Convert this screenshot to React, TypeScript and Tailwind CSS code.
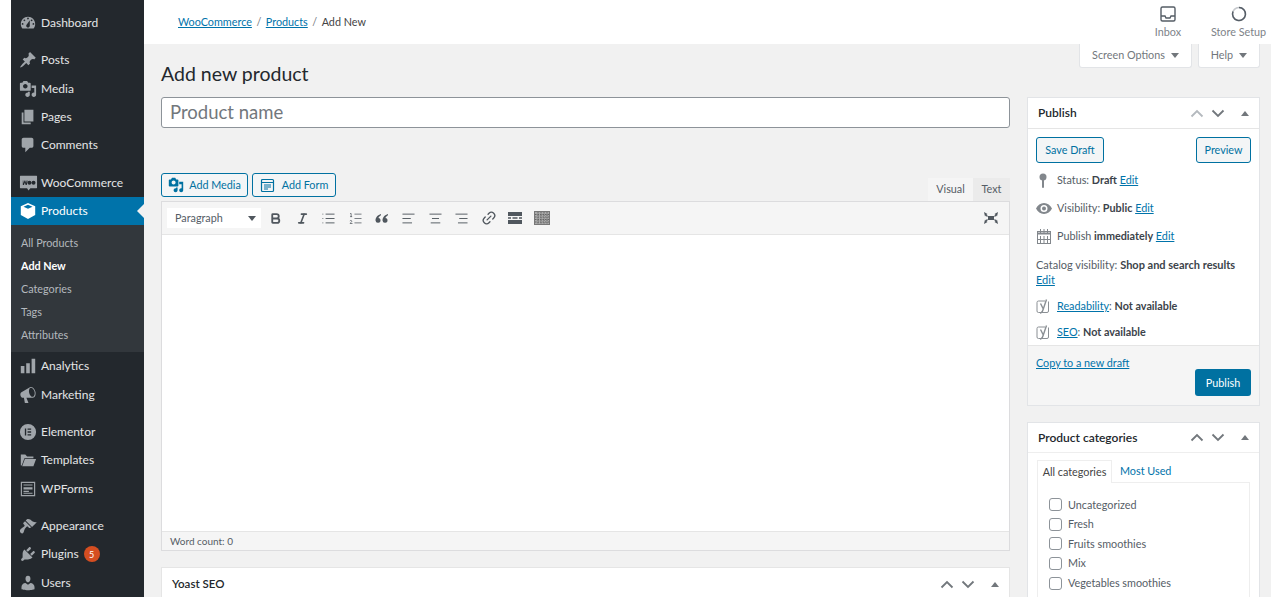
import { Bold, Italic, List, ListOrdered, AlignLeft, AlignCenter, AlignRight, Link2 } from "lucide-react";
import type { ReactNode } from "react";

const P: Record<string, string> = {
  dashboard: "M3.76 16h12.48c1.1-1.37 1.76-3.11 1.76-5 0-4.42-3.58-8-8-8s-8 3.58-8 8c0 1.89.66 3.63 1.76 5zM10 4c.55 0 1 .45 1 1s-.45 1-1 1-1-.45-1-1 .45-1 1-1zM6 6c.55 0 1 .45 1 1s-.45 1-1 1-1-.45-1-1 .45-1 1-1zm8 0c.55 0 1 .45 1 1s-.45 1-1 1-1-.45-1-1 .45-1 1-1zm-5.37 5.55L12 7v6c0 1.1-.9 2-2 2s-2-.9-2-2c0-.57.24-1.08.63-1.45zM4 10c.55 0 1 .45 1 1s-.45 1-1 1-1-.45-1-1 .45-1 1-1zm12 0c.55 0 1 .45 1 1s-.45 1-1 1-1-.45-1-1 .45-1 1-1z",
  pin: "M10.44 3.02l1.82-1.82 6.36 6.35-1.83 1.82c-1.05-.68-2.48-.57-3.41.36l-.75.75c-.92.93-1.04 2.35-.35 3.41l-1.83 1.82-2.41-2.41-2.8 2.79c-.42.42-3.38 2.71-3.8 2.29s1.86-3.39 2.28-3.81l2.79-2.79L4.1 9.36l1.83-1.82c1.05.69 2.48.57 3.4-.36l.75-.75c.93-.92 1.05-2.35.36-3.41z",
  media: "M13 11V4c0-.55-.45-1-1-1h-1.67L9 1H5L3.67 3H2c-.55 0-1 .45-1 1v7c0 .55.45 1 1 1h10c.55 0 1-.45 1-1zM7 4.5c1.38 0 2.5 1.12 2.5 2.5S8.38 9.5 7 9.5 4.5 8.38 4.5 7 5.62 4.5 7 4.5zM14 6h5v10.5c0 1.38-1.12 2.5-2.5 2.5S14 17.88 14 16.5s1.12-2.5 2.5-2.5c.17 0 .34.02.5.05V9h-3V6zm-4 8.05V13h2v3.5c0 1.38-1.12 2.5-2.5 2.5S7 17.88 7 16.5 8.12 14 9.5 14c.17 0 .34.02.5.05z",
  pages: "M6 15V2h10v13H6zm-1 1h8v2H3V5h2v11z",
  comment: "M5 2h9c1.1 0 2 .9 2 2v7c0 1.1-.9 2-2 2h-2l-5 5v-5H5c-1.1 0-2-.9-2-2V4c0-1.1.9-2 2-2z",
  woo: "M1.500 3h17c.3 0 .5.2.5.5v12c0 .3-.2.5-.5.500H12l-2 2.500L8.500 16h-7c-.3 0-.5-.2-.5-.5v-12c0-.3.2-.5.5-.5zM4 8v4.500h1.200L6.200 10l.8 2.500h1.200L9 8H8l-.5 2.800L6.600 8h-.8l-1 2.800L4.500 8H4zm7 .2a2.100 2.100 0 100 4.200 2.100 2.100 0 000-4.200zm4.300 0a2.100 2.100 0 100 4.200 2.100 2.100 0 000-4.200z",
  product: "M10 1l8 3.600v9.800L10 19l-8-4.600V4.600L10 1zm0 2L5 5.200l5 2.300 5-2.300L10 3z",
  chart: "M18 18V2h-4v16h4zm-6 0V7H8v11h4zm-6 0v-8H2v8h4z",
  mega: "M18.150 5.940c.46 1.620.38 3.220-.02 4.480-.42 1.280-1.260 2.180-2.300 2.480-.16.06-.26.06-.4.06l-.4.040h-6.800l2.220 5.500c.02.140-.06.260-.14.340-.08.100-.24.160-.34.160H6.950c-.1 0-.26-.06-.34-.16-.08-.08-.16-.2-.14-.34l-1-5.500H4.250c-.5.060-1.080-.18-1.540-.62s-.88-1.080-1.060-1.880c-.24-.8-.2-1.560-.02-2.200.18-.62.58-1.080 1.060-1.300l9-5.400.48-.28c.16-.08.28-.12.5-.18 1.040-.3 2.240.1 3.220.98s1.760 2.240 2.220 3.860zm-2.580 5.980c.4-.1.740-.34 1.040-.7.580-.7.860-1.760.860-3.040-.02-.64-.1-1.300-.28-1.980-.34-1.360-1.020-2.500-1.780-3.240s-1.680-1.100-2.460-.88c-.82.22-1.400.96-1.700 2-.32 1.040-.28 2.360.06 3.720.38 1.360 1 2.500 1.800 3.240.78.740 1.620 1.100 2.460.880z",
  elementor: "M10 1a9 9 0 110 18 9 9 0 010-18zM6.500 6v8H8V6H6.500zm3 0v1.600h4V6h-4zm0 3.200v1.600h4V9.200h-4zm0 3.200V14h4v-1.600h-4z",
  folder: "M2 4h5l2 2h7v2H6l-3 8H2V4zm4.500 5H19l-3 8H3.500l3-8z",
  forms: "M2 2h16v16H2V2zm1.300 1.300v13.400h13.400V3.300H3.300zM5 5h10v1.200H5V5zm0 3h10v2.500H5V8zm0 4h6v1.200H5V12zm0 2.200h10v1H5v-1z",
  brush: "M14.480 11.060L7.410 3.990l1.500-1.500c.5-.56 2.300-.47 3.510.32 1.210.8 1.430 1.280 2.910 2.100 1.180.64 2.450 1.260 4.450.85zm-.71.71L6.700 4.700 4.930 6.470c-.39.39-.39 1.020 0 1.410l1.060 1.060c.39.39.39 1.030 0 1.420-.6.6-1.430 1.110-2.210 1.690-.35.26-.7.53-1.010.84C1.430 13.710 1 14.650 1 15.540c0 .89.43 1.830 1.770 2.480 1.400.7 2.330-.45 2.650-1.800.42-1.810 1.620-4.280 3.070-5.290.53-.38 1.200-.34 1.530.02l.95.95c.39.38 1.030.38 1.420 0z",
  plug: "M13.110 4.360L9.870 7.600 8 5.730l3.240-3.240c.35-.34 1.050-.2 1.560.32.52.51.66 1.210.31 1.550zm-8 1.770l.91-1.120 9.010 9.010-1.190.84c-.71.71-2.630 1.160-3.820 1.160H6.140L4.900 17.260c-.59.59-1.540.59-2.120 0-.59-.58-.59-1.530 0-2.120l1.240-1.240v-3.880c0-1.130.4-3.190 1.090-3.890zm7.260 3.970l3.240-3.240c.34-.35 1.040-.21 1.550.31.52.51.66 1.210.31 1.550l-3.240 3.250z",
  users: "M10 9.250c-2.270 0-2.730-3.440-2.730-3.440C7 4.020 7.820 2 9.970 2c2.160 0 2.980 2.020 2.710 3.810 0 0-.41 3.440-2.680 3.440zm0 2.570L12.720 10c2.390 0 4.520 2.330 4.520 4.530v2.490s-3.650 1.130-7.240 1.130c-3.650 0-7.240-1.130-7.240-1.130v-2.490c0-2.250 1.940-4.480 4.470-4.480z",
};

function Dash({ d, size = 20, className = "" }: { d: string; size?: number; className?: string }) {
  return (
    <svg viewBox="0 0 20 20" width={size} height={size} fill="currentColor" fillRule="evenodd" className={className}>
      <path d={d} />
    </svg>
  );
}

function MenuItem({ icon, label, badge, active }: { icon: string; label: string; badge?: string; active?: boolean }) {
  return (
    <div className={`relative flex h-[28.33px] items-center ${active ? "bg-[#0073aa] text-white" : "text-[#e4e5e6]"}`}>
      <span className={`ml-[4px] flex w-[26px] justify-center ${active ? "text-white" : "text-[#a0a5aa]"}`}>
        <Dash d={P[icon]} size={icon === "woo" ? 19 : 18} />
      </span>
      <span className="text-[12px]">{label}</span>
      {badge && (
        <span className="ml-[5px] flex h-[16px] w-[16px] items-center justify-center rounded-full bg-[#d54e21] text-[9px] text-white">{badge}</span>
      )}
      {active && (
        <span className="absolute right-0 top-[7px] h-0 w-0 border-y-[7px] border-r-[7px] border-y-transparent border-r-[#f1f1f1]" />
      )}
    </div>
  );
}

function Sep() {
  return <div className="h-[9px]" />;
}

function Chevrons({ faded }: { faded?: boolean }) {
  return (
    <div className="flex items-center text-[#72777c]">
      <svg width="14" height="9" viewBox="0 0 14 9" fill="none" stroke="currentColor" strokeWidth="1.800" className={faded ? "text-[#b4b9be]" : ""}><path d="M1.500 7.500L7 2l5.500 5.500" /></svg>
      <svg width="14" height="9" viewBox="0 0 14 9" fill="none" stroke="currentColor" strokeWidth="1.800" className="ml-[7px]"><path d="M1.500 1.500L7 7l5.500-5.500" /></svg>
      <span className="ml-[16px] h-0 w-0 border-x-[4px] border-b-[5px] border-x-transparent border-b-[#72777c]" />
    </div>
  );
}

function EditLink({ children = "Edit" }: { children?: ReactNode }) {
  return <a className="text-[#0073aa] underline">{children}</a>;
}

function Row({ icon, children, h }: { icon: ReactNode; children: ReactNode; h: string }) {
  return (
    <div className={`flex items-center ${h}`}>
      <span className="flex w-[21px] shrink-0 justify-start text-[#82878c]">{icon}</span>
      <span className="text-[10.800px] text-[#555d66]">{children}</span>
    </div>
  );
}

function YoastIcon() {
  return (
    <svg width="15" height="17" viewBox="0 0 15 17" fill="none" className="text-[#8a8f94]" stroke="currentColor">
      <path d="M12.500 3.500V13a1.500 1.500 0 01-1.500 1.500H2.500A1.500 1.500 0 011 13V4.500A1.500 1.500 0 012.500 3H9" strokeWidth="1" />
      <path d="M4.500 5.500l2.800 5.500L10.500 1.500M7.300 11c-.4 2-1.200 3.500-3 4.500" strokeWidth="1.400" />
    </svg>
  );
}

function ToolIcon({ children }: { children: ReactNode }) {
  return <span className="flex w-[26.600px] justify-center text-[#50575e]">{children}</span>;
}

const cats = ["Uncategorized", "Fresh", "Fruits smoothies", "Mix", "Vegetables smoothies"];

export default function App() {
  return (
    <div className="relative flex h-[597px] w-[1271px] overflow-hidden bg-white font-['Lato','Open_Sans',sans-serif]">
      {/* Sidebar */}
      <aside className="ml-[11px] h-full w-[133px] shrink-0 bg-[#23282d] pt-[9px]">
        <MenuItem icon="dashboard" label="Dashboard" />
        <Sep />
        <MenuItem icon="pin" label="Posts" />
        <MenuItem icon="media" label="Media" />
        <MenuItem icon="pages" label="Pages" />
        <MenuItem icon="comment" label="Comments" />
        <Sep />
        <MenuItem icon="woo" label="WooCommerce" />
        <MenuItem icon="product" label="Products" active />
        <div className="h-[127px] bg-[#32373c] pt-[6px] text-[10.800px] text-[#b4b9be]">
          {["All Products", "Add New", "Categories", "Tags", "Attributes"].map((s) => (
            <div key={s} className={`flex h-[23px] items-center pl-[10px] ${s === "Add New" ? "font-bold text-white" : ""}`}>{s}</div>
          ))}
        </div>
        <MenuItem icon="chart" label="Analytics" />
        <MenuItem icon="mega" label="Marketing" />
        <Sep />
        <MenuItem icon="elementor" label="Elementor" />
        <MenuItem icon="folder" label="Templates" />
        <MenuItem icon="forms" label="WPForms" />
        <Sep />
        <MenuItem icon="brush" label="Appearance" />
        <MenuItem icon="plug" label="Plugins" badge="5" />
        <MenuItem icon="users" label="Users" />
      </aside>

      {/* Main */}
      <div className="relative min-w-0 flex-1 bg-[#f1f1f1]">
        <header className="flex h-[44px] items-center justify-between bg-white pl-[34px]">
          <div className="flex items-center text-[10.800px] text-[#444]">
            <a className="text-[#0073aa] underline">WooCommerce</a>
            <span className="mx-[4.500px] text-[#72777c]">/</span>
            <a className="text-[#0073aa] underline">Products</a>
            <span className="mx-[4.500px] text-[#72777c]">/</span>
            <span>Add New</span>
          </div>
          <div className="flex h-full text-[10.800px] text-[#7d8288]">
            <div className="flex w-[76px] flex-col items-center pt-[5px]">
              <svg width="18" height="18" viewBox="0 0 18 18" fill="none" stroke="#555d66" strokeWidth="1.400">
                <rect x="2" y="2" width="14" height="14" rx="1.500" />
                <path d="M2 11h4l1 2h4l1-2h4" />
              </svg>
              <span className="mt-[1px] leading-[16px]">Inbox</span>
            </div>
            <div className="flex w-[65px] flex-col items-center pt-[5px]">
              <svg width="18" height="18" viewBox="0 0 18 18" fill="none" strokeWidth="1.500">
                <circle cx="9" cy="9" r="6.500" stroke="#c5c8cc" />
                <path d="M9 2.500a6.500 6.500 0 11-6 4" stroke="#555d66" />
              </svg>
              <span className="mt-[1px] whitespace-nowrap leading-[16px]">Store Setup</span>
            </div>
          </div>
        </header>

        {/* Screen options tabs */}
        <div className="absolute right-[11px] top-[44px] flex gap-[6px] text-[10.800px] text-[#72777c]">
          <div className="flex h-[24px] w-[113px] items-center justify-center gap-[6px] rounded-b-[3px] border-x border-b border-[#e2e4e7] bg-white">
            Screen Options
            <span className="h-0 w-0 border-x-[4px] border-t-[5px] border-x-transparent border-t-[#72777c]" />
          </div>
          <div className="flex h-[24px] w-[62px] items-center justify-center gap-[6px] rounded-b-[3px] border-x border-b border-[#e2e4e7] bg-white">
            Help
            <span className="h-0 w-0 border-x-[4px] border-t-[5px] border-x-transparent border-t-[#72777c]" />
          </div>
        </div>

        <div className="flex pl-[17px]">
          {/* Left column */}
          <div className="w-[849px]">
            <h1 className="h-[53px] pt-[17px] text-[19.500px] leading-[26px] text-[#23282d]">Add new product</h1>
            <div className="flex h-[31px] items-center rounded-[3px] border border-[#8d9399] bg-white pl-[8px] pt-[1px] text-[18.500px] text-[#72777c]">Product name</div>

            <div className="mt-[45px] flex h-[28px] items-start justify-between">
              <div className="flex gap-[4px] text-[10.800px] text-[#0071a1]">
                <div className="flex h-[24px] w-[87px] items-center justify-center gap-[5px] rounded-[3px] border border-[#0071a1] bg-[#f3f5f6]">
                  <Dash d={P.media} size={16} />Add Media
                </div>
                <div className="flex h-[24px] w-[84px] items-center justify-center gap-[7px] rounded-[3px] border border-[#0071a1] bg-[#f3f5f6]">
                  <svg width="15" height="15" viewBox="0 0 15 15" fill="none" stroke="currentColor" strokeWidth="1.200">
                    <rect x="1.500" y="1.500" width="12" height="12" rx="1" />
                    <path d="M1.500 4.500h12M4 7h7M4 9h7M4 11h4" />
                  </svg>
                  Add Form
                </div>
              </div>
              <div className="mt-[5px] flex h-[23px] text-[10.800px] text-[#555d66]">
                <div className="flex w-[45px] items-center justify-center bg-[#f5f5f5]">Visual</div>
                <div className="flex w-[37px] items-center justify-center bg-[#ebebeb]">Text</div>
              </div>
            </div>

            <div className="border border-[#dcdcde]">
              <div className="flex h-[33px] items-center border-b border-[#e5e5e5] bg-[#f5f5f5] pl-[5px] pr-[10px]">
                <div className="flex h-[20px] w-[94px] items-center justify-between bg-white pl-[8px] pr-[5px] text-[10.800px] text-[#555d66]">
                  Paragraph
                  <span className="h-0 w-0 border-x-[4px] border-t-[5px] border-x-transparent border-t-[#50575e]" />
                </div>
                <div className="ml-[1.500px] flex items-center">
                  <ToolIcon><Bold size={13} strokeWidth={3.400} /></ToolIcon>
                  <ToolIcon><Italic size={13} strokeWidth={3} /></ToolIcon>
                  <ToolIcon><List size={15} strokeWidth={1.500} /></ToolIcon>
                  <ToolIcon><ListOrdered size={15} strokeWidth={1.200} /></ToolIcon>
                  <ToolIcon>
                    <svg width="14" height="11" viewBox="0 0 14 11" fill="currentColor">
                      <path d="M6 1C3 2 .500 4 .500 7.500a2.500 2.500 0 105-.5C5.500 5.800 4.500 5 3.400 5 3.800 3.800 4.800 2.800 6 2.200V1zM13 1c-3 1-5.500 3-5.500 6.500a2.500 2.500 0 105-.5c0-1.200-1-2-2.100-2 .4-1.200 1.400-2.200 2.600-2.800V1z" />
                    </svg>
                  </ToolIcon>
                  <ToolIcon><AlignLeft size={15} strokeWidth={1.500} /></ToolIcon>
                  <ToolIcon><AlignCenter size={15} strokeWidth={1.500} /></ToolIcon>
                  <ToolIcon><AlignRight size={15} strokeWidth={1.500} /></ToolIcon>
                  <ToolIcon><Link2 size={16} strokeWidth={2} className="-rotate-45" /></ToolIcon>
                  <ToolIcon>
                    <svg width="14" height="12" viewBox="0 0 14 12" fill="currentColor">
                      <path d="M0 0h14v4H0zM0 5.300h3v1.400H0zM4.500 5.300h5v1.400h-5zM11 5.300h3v1.400h-3zM0 8h14v4H0z" />
                    </svg>
                  </ToolIcon>
                  <ToolIcon>
                    <svg width="16" height="14" viewBox="0 0 16 14" fill="none" stroke="#777" strokeWidth="1">
                      <rect x=".500" y=".500" width="15" height="13" fill="#aaa" />
                      <path d="M1 3.500h14M1 6h14M1 8.500h14M1 11h14M4 1v12M7 1v12M10 1v12M13 1v12" stroke="#666" strokeDasharray="1.500 1" />
                    </svg>
                  </ToolIcon>
                </div>
                <svg width="16" height="14" viewBox="0 0 16 14" fill="#50575e" className="ml-auto">
                  <path d="M5 5h6v4H5zM1 1l3.500 2-1 .8L5 5 4 6 2.700 4.500l-.7 1zM15 1l-3.500 2 1 .8L11 5l1 1 1.300-1.500.7 1zM1 13l3.500-2-1-.8L5 9 4 8 2.700 9.500l-.7-1zM15 13l-3.500-2 1-.8L11 9l1-1 1.300 1.500.7-1z" />
                </svg>
              </div>
              <div className="h-[296px] bg-white" />
              <div className="flex h-[19px] items-center border-t border-[#e5e5e5] bg-[#f5f5f5] pl-[8px] text-[10px] text-[#555d66]">Word count: 0</div>
            </div>

            <div className="mt-[16px] flex h-[40px] items-start justify-between border border-[#e5e5e5] bg-white pl-[10px] pr-[10px]">
              <span className="pt-[7px] text-[11.500px] font-semibold text-[#23282d]">Yoast SEO</span>
              <div className="pt-[12px]"><Chevrons /></div>
            </div>
          </div>

          {/* Right column */}
          <div className="ml-[17px] w-[233px] pt-[53px]">
            <section className="border border-[#e2e4e7] bg-white">
              <div className="flex h-[31px] items-center justify-between border-b border-[#e5e5e5] pl-[10px] pr-[10px]">
                <span className="text-[12px] font-semibold text-[#23282d]">Publish</span>
                <Chevrons faded />
              </div>
              <div className="px-[8px] pt-[8px]">
                <div className="flex justify-between text-[10.800px] text-[#0071a1]">
                  <div className="flex h-[26px] w-[68px] items-center justify-center rounded-[3px] border border-[#0071a1] bg-[#f3f5f6]">Save Draft</div>
                  <div className="flex h-[26px] w-[55px] items-center justify-center rounded-[3px] border border-[#0071a1] bg-[#f3f5f6]">Preview</div>
                </div>
                <Row h="mt-[3px] h-[28px]" icon={<svg width="8" height="15" viewBox="0 0 8 15" fill="currentColor" className="ml-[3px]"><circle cx="4" cy="4" r="3.500" /><rect x="3" y="6" width="2" height="9" rx="1" /></svg>}>
                  Status: <b className="font-bold text-[#3c434a]">Draft</b> <EditLink />
                </Row>
                <Row h="h-[28px]" icon={<svg width="16" height="11" viewBox="0 0 16 11" fill="currentColor" fillRule="evenodd"><path d="M8 0c3.500 0 6.300 2.300 8 5.500C14.300 8.700 11.500 11 8 11S1.700 8.700 0 5.500C1.700 2.300 4.500 0 8 0zm0 2a3.500 3.500 0 100 7 3.500 3.500 0 000-7zm0 1.500a2 2 0 110 4 2 2 0 010-4z" /></svg>}>
                  Visibility: <b className="font-bold text-[#3c434a]">Public</b> <EditLink />
                </Row>
                <Row h="h-[28px]" icon={<svg width="14" height="15" viewBox="0 0 14 15" fill="none" stroke="currentColor" className="ml-[1px]"><rect x=".500" y="2.500" width="13" height="12" /><path d="M1 4.500h12" strokeWidth="2" /><path d="M3.500 0v4M7 0v4M10.500 0v4M3.500 7v7M7 7v7M10.500 7v7M1 10.500h12" /></svg>}>
                  Publish <b className="font-bold text-[#3c434a]">immediately</b> <EditLink />
                </Row>
                <div className="mt-[7px] text-[11px] leading-[15px] text-[#555d66]">
                  Catalog visibility: <b className="font-bold text-[#3c434a]">Shop and search results</b>
                  <br />
                  <EditLink />
                </div>
                <Row h="mt-[6px] h-[26px]" icon={<YoastIcon />}>
                  <EditLink>Readability</EditLink>: <b className="font-bold text-[#3c434a]">Not available</b>
                </Row>
                <Row h="h-[26px]" icon={<YoastIcon />}>
                  <EditLink>SEO</EditLink>: <b className="font-bold text-[#3c434a]">Not available</b>
                </Row>
              </div>
              <div className="h-[60px] border-t border-[#e5e5e5] bg-[#f5f5f5] px-[8px]">
                <div className="h-[23px] pt-[10px] text-[10.800px] leading-[14px]"><EditLink>Copy to a new draft</EditLink></div>
                <div className="flex justify-end">
                  <div className="flex h-[27px] w-[56px] items-center justify-center rounded-[3px] bg-[#0071a1] pt-[1px] text-[10.800px] text-white">Publish</div>
                </div>
              </div>
            </section>

            <section className="mt-[16px] h-[200px] border border-[#e2e4e7] bg-white">
              <div className="flex h-[30px] items-center justify-between border-b border-[#eeeeee] pl-[10px] pr-[10px]">
                <span className="text-[12px] font-semibold text-[#23282d]">Product categories</span>
                <Chevrons />
              </div>
              <div className="px-[9px] pt-[7px]">
                <div className="relative z-10 flex h-[23px] text-[10.800px]">
                  <div className="flex w-[75px] items-center justify-center border-x border-t border-[#eeeeee] bg-white text-[#444]">All categories</div>
                  <div className="flex items-center pl-[8px] text-[#0073aa]">Most Used</div>
                </div>
                <div className="-mt-px h-[130px] border border-[#eeeeee] pl-[11px] pt-[12px]">
                  {cats.map((c) => (
                    <div key={c} className="flex h-[19.600px] items-center text-[10.800px] text-[#555d66]">
                      <span className="h-[13px] w-[13px] rounded-[3px] border border-[#8d9399] bg-white" />
                      <span className="ml-[6px]">{c}</span>
                    </div>
                  ))}
                </div>
              </div>
            </section>
          </div>
        </div>
      </div>
    </div>
  );
}
